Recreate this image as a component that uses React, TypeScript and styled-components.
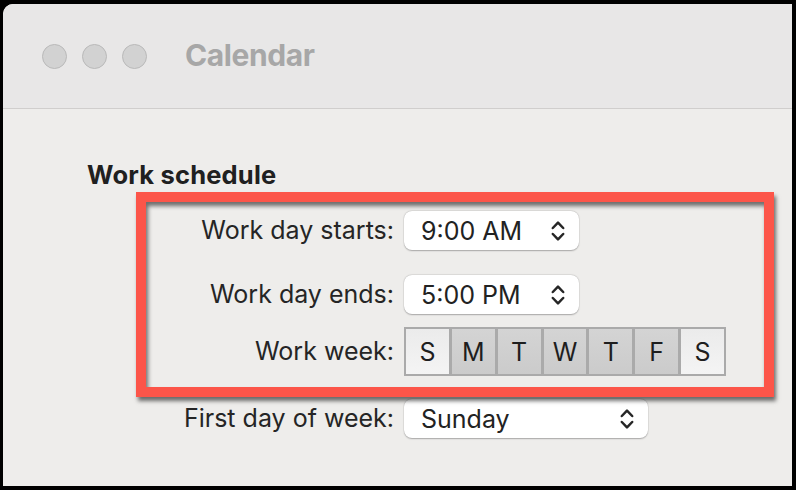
import React from 'react';
import styled, { createGlobalStyle } from 'styled-components';

const GlobalStyle = createGlobalStyle`
  html, body {
    margin: 0;
    padding: 0;
    background: #000;
  }
  body {
    font-family: Inter, "Liberation Sans", Arial, sans-serif;
    -webkit-font-smoothing: antialiased;
  }
`;

const Window = styled.div`
  position: relative;
  margin: 4px 4px 4px 3px;
  height: 482px;
  background: #eeedeb;
  border-top-left-radius: 10px;
  overflow: hidden;
  display: flex;
  flex-direction: column;
`;

const TitleBar = styled.header`
  height: 104px;
  flex-shrink: 0;
  background: #e8e7e7;
  border-bottom: 1px solid #d0cecd;
  display: flex;
  align-items: center;
  padding-left: 39px;
`;

const Lights = styled.div`
  display: flex;
  gap: 15px;
  margin-right: 38px;
`;

const Light = styled.span`
  width: 25px;
  height: 25px;
  box-sizing: border-box;
  border-radius: 50%;
  background: #d2d2d2;
  border: 1px solid #b9b9b9;
`;

const Title = styled.h1`
  margin: 0 0 2px;
  font-size: 30px;
  font-weight: 700;
  color: #a7a7a7;
  letter-spacing: -0.4px;
`;

const Content = styled.main`
  padding: 50px 0 0 84px;
`;

const SectionTitle = styled.h2`
  margin: 0;
  font-size: 25.5px;
  line-height: 32px;
  font-weight: 700;
  color: #202020;
  letter-spacing: 0.2px;
`;

const Form = styled.div`
  display: flex;
  flex-direction: column;
  margin-top: 20px;
`;

const Row = styled.div<{ $gap: number }>`
  display: grid;
  grid-template-columns: 307px auto;
  column-gap: 10px;
  align-items: center;
  margin-top: ${p => p.$gap}px;
`;

const Label = styled.label`
  text-align: right;
  font-size: 25px;
  color: #252525;
  margin-top: -2px;
  white-space: nowrap;
`;

const Popup = styled.div<{ $width: number }>`
  width: ${p => p.$width}px;
  height: 39px;
  box-sizing: border-box;
  padding: 0 14px 0 17px;
  display: flex;
  align-items: center;
  justify-content: space-between;
  background: #fff;
  border-radius: 8px;
  box-shadow: 0 0.5px 1.5px rgba(0, 0, 0, 0.28), 0 0 0 0.5px rgba(0, 0, 0, 0.06);
  font-size: 25px;
  color: #222;
`;

const Segments = styled.div`
  width: 322px;
  height: 49px;
  box-sizing: border-box;
  padding: 2px;
  display: flex;
  gap: 3px;
  background: #aaaaaa;
`;

const Segment = styled.div<{ $on: boolean }>`
  flex: 1;
  display: flex;
  align-items: center;
  justify-content: center;
  font-size: 25px;
  color: #1e1e1e;
  background: ${p =>
    p.$on
      ? 'linear-gradient(#d4d4d4, #cbcbcb)'
      : 'linear-gradient(#ebebeb, #f4f4f4)'};
`;

const Highlight = styled.div`
  position: absolute;
  left: 133px;
  top: 188px;
  width: 638px;
  height: 205px;
  box-sizing: border-box;
  border: 10px solid #fc5549;
  box-shadow: 2px 4px 4px rgba(0, 0, 0, 0.55), inset 2px 4px 4px rgba(0, 0, 0, 0.55);
  pointer-events: none;
`;

function Chevrons() {
  return (
    <svg width="14" height="22" viewBox="0 0 14 22" fill="none">
      <path
        d="M1.8 8 L7 2.6 L12.2 8 M1.8 14 L7 19.4 L12.2 14"
        stroke="#262626"
        strokeWidth="2.5"
        strokeLinecap="round"
        strokeLinejoin="round"
      />
    </svg>
  );
}

const days = [
  { d: 'S', on: false },
  { d: 'M', on: true },
  { d: 'T', on: true },
  { d: 'W', on: true },
  { d: 'T', on: true },
  { d: 'F', on: true },
  { d: 'S', on: false },
];

export default function App() {
  return (
    <>
      <GlobalStyle />
      <Window>
        <TitleBar>
          <Lights>
            <Light />
            <Light />
            <Light />
          </Lights>
          <Title>Calendar</Title>
        </TitleBar>

        <Content>
          <SectionTitle>Work schedule</SectionTitle>
          <Form>
            <Row $gap={0}>
              <Label>Work day starts:</Label>
              <Popup $width={175}>
                <span>9:00 AM</span>
                <Chevrons />
              </Popup>
            </Row>
            <Row $gap={25}>
              <Label>Work day ends:</Label>
              <Popup $width={175}>
                <span>5:00 PM</span>
                <Chevrons />
              </Popup>
            </Row>
            <Row $gap={13}>
              <Label>Work week:</Label>
              <Segments>
                {days.map((day, i) => (
                  <Segment key={i} $on={day.on}>
                    {day.d}
                  </Segment>
                ))}
              </Segments>
            </Row>
            <Row $gap={23}>
              <Label>First day of week:</Label>
              <Popup $width={244}>
                <span>Sunday</span>
                <Chevrons />
              </Popup>
            </Row>
          </Form>
        </Content>

        <Highlight />
      </Window>
    </>
  );
}
